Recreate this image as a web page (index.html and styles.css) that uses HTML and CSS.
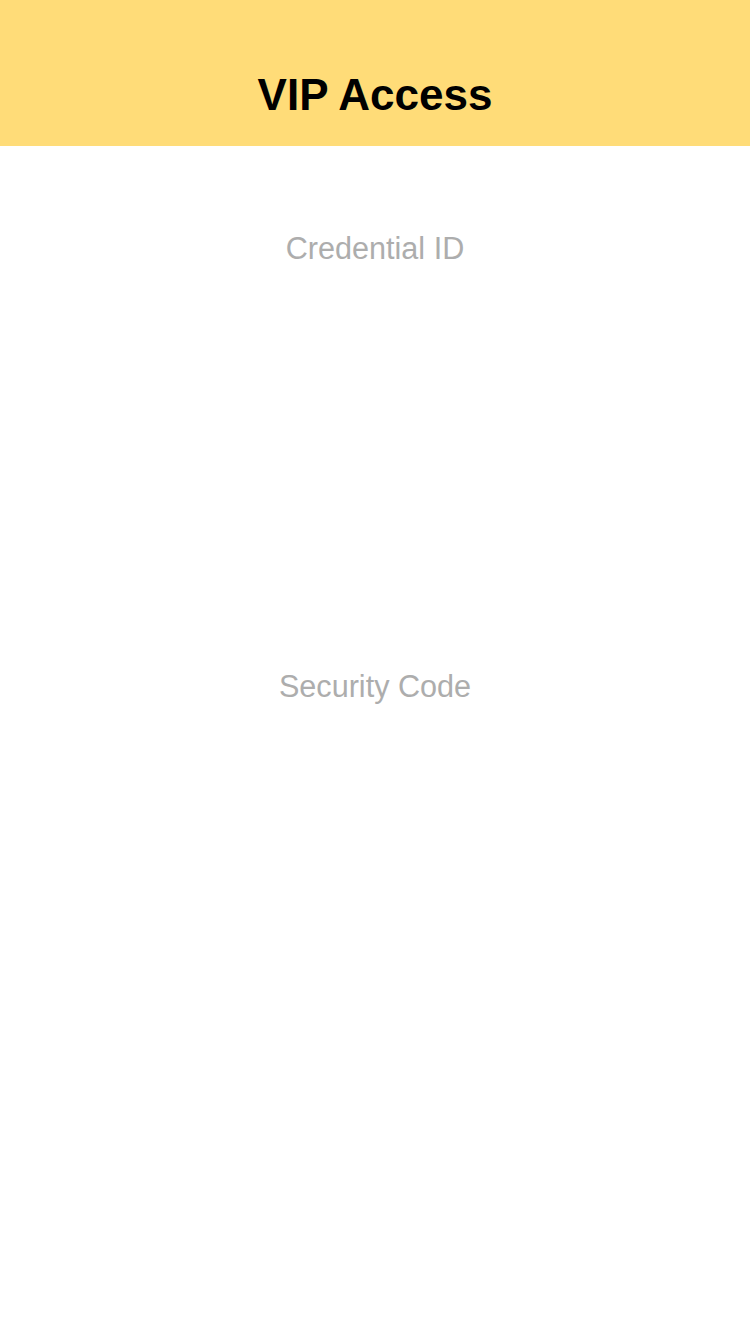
FILE: index.html
```html
<!DOCTYPE html>
<html>
<head>
<meta charset="utf-8">
<link rel="stylesheet" href="styles.css">
</head>
<body>
<div class="app">
  <header class="navbar">
    <div class="status"></div>
    <div class="titlebar"><h1 class="title">VIP Access</h1></div>
  </header>
  <main class="content">
    <section class="field">
      <div class="label">Credential ID</div>
      <div class="value value-id"></div>
    </section>
    <section class="field">
      <div class="label">Security Code</div>
      <div class="value value-code"></div>
    </section>
  </main>
</div>
</body>
</html>
```
FILE: styles.css
```css
html, body {
  margin: 0;
  padding: 0;
  background: #ffffff;
}
.app {
  width: 750px;
  min-height: 1334px;
  display: flex;
  flex-direction: column;
  font-family: "Liberation Sans", Arial, sans-serif;
}
.navbar {
  background: #ffdc78;
  display: flex;
  flex-direction: column;
  height: 146px;
}
.status {
  height: 44px;
}
.titlebar {
  flex: 1;
  display: flex;
  align-items: center;
  justify-content: center;
}
.title {
  margin: 0;
  font-size: 44px;
  font-weight: bold;
  color: #000;
  line-height: 52px;
}
.content {
  display: flex;
  flex-direction: column;
  align-items: center;
  padding-top: 84px;
}
.field {
  display: flex;
  flex-direction: column;
  align-items: center;
  width: 100%;
}
.label {
  font-size: 30.6px;
  line-height: 36px;
  color: #adadad;
}
.value-id {
  height: 402px;
}
.value-code {
  height: 400px;
}
```
